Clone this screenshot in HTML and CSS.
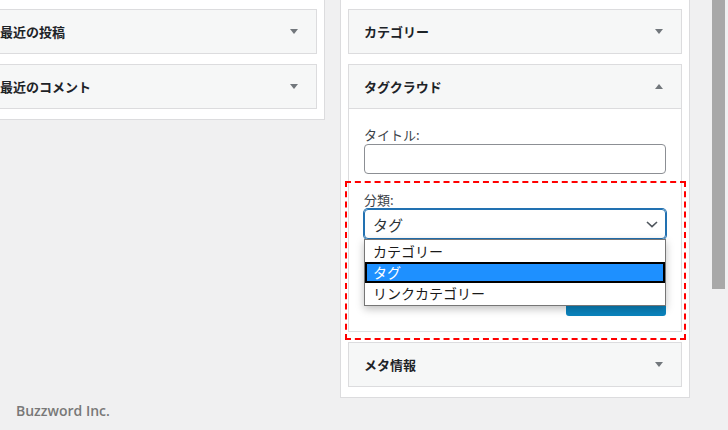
FILE: index.html
```html
<!DOCTYPE html>
<html lang="ja">

<head>
  <meta charset="UTF-8" />
  <title>ウィジェット - タグクラウド</title>
  <link rel="stylesheet" href="styles.css">
</head>

<body>
  <div class="page">
    <main class="main">
      <div class="areas">
        <!-- 左のウィジェットエリア -->
        <section class="area area-left">
          <div class="widget">
            <div class="widget-top">
              <h3>最近の投稿</h3>
              <span class="arrow"></span>
            </div>
          </div>
          <div class="widget">
            <div class="widget-top">
              <h3>最近のコメント</h3>
              <span class="arrow"></span>
            </div>
          </div>
        </section>

        <!-- 右のウィジェットエリア -->
        <section class="area area-right">
          <div class="widget">
            <div class="widget-top">
              <h3>カテゴリー</h3>
              <span class="arrow"></span>
            </div>
          </div>

          <div class="widget open">
            <div class="widget-top">
              <h3>タグクラウド</h3>
              <span class="arrow"></span>
            </div>
            <!-- 設定フォーム -->
            <div class="widget-inside">
              <label class="label">タイトル:</label>
              <div class="input"></div>

              <label class="label label-gap">分類:</label>
              <div class="select-wrap">
                <div class="select">
                  <span>タグ</span>
                  <svg class="chev" width="12" height="7" viewBox="0 0 12 7">
                    <path d="M1 1 L6 5.6 L11 1" fill="none" stroke="#50575e" stroke-width="1.6" />
                  </svg>
                </div>
                <!-- 開いたドロップダウン -->
                <ul class="options">
                  <li>カテゴリー</li>
                  <li class="on">タグ</li>
                  <li>リンクカテゴリー</li>
                </ul>
              </div>

              <div class="actions">
                <span class="btn">保存</span>
              </div>
            </div>
          </div>

          <div class="widget">
            <div class="widget-top">
              <h3>メタ情報</h3>
              <span class="arrow"></span>
            </div>
          </div>

          <!-- 注目枠 -->
          <div class="mark"></div>
        </section>
      </div>

      <p class="footer">Buzzword Inc.</p>
    </main>

    <!-- スクロールバー -->
    <div class="scroll">
      <div class="thumb"></div>
    </div>
  </div>
</body>

</html>
```

FILE: styles.css
```css
/* 초기화 */
html,
body,
ul,
h3,
p {
  margin: 0;
  padding: 0;
}

ul {
  list-style: none;
}

body {
  height: 430px;
  overflow: hidden;
  background-color: #f0f0f1;
  color: #1d2327;
  font-family: "Noto Sans CJK JP", "Noto Sans", sans-serif;
}

/* 전체 */
.page {
  display: flex;
  height: 430px;
}

.main {
  flex: 1;
}

/* 위젯 영역 2단 */
.areas {
  display: flex;
  align-items: flex-start;
  gap: 15px;
  margin-left: -24px;
}

.area {
  position: relative;
  box-sizing: border-box;
  padding: 9px 7px 10px;
  background-color: #fff;
  border: 1px solid #dcdcde;
  border-top: 0;
}

.area-left {
  width: 349px;
}

.area-right {
  width: 350px;
}

/* 위젯 박스 */
.widget {
  border: 1px solid #dcdcde;
  background-color: #f6f7f7;
}

.widget+.widget {
  margin-top: 10px;
}

.widget-top {
  display: flex;
  align-items: center;
  justify-content: space-between;
  height: 43px;
  padding: 0 18px 0 15px;
}

.widget-top h3 {
  font-size: 13px;
  font-weight: 700;
  line-height: 43px;
}

/* 삼각형 */
.arrow {
  width: 0;
  height: 0;
  border-left: 4px solid transparent;
  border-right: 4px solid transparent;
  border-top: 5px solid #72777c;
}

.open .arrow {
  border-top: 0;
  border-bottom: 5px solid #72777c;
}

.open .widget-top {
  border-bottom: 1px solid #dcdcde;
}

/* 펼친 내용 */
.widget-inside {
  padding: 17px 15px 15px;
  background-color: #fff;
}

.label {
  display: block;
  font-size: 13px;
  line-height: 18px;
  color: #3c434a;
}

.label-gap {
  margin-top: 17px;
}

.input {
  box-sizing: border-box;
  height: 30px;
  border: 1px solid #8c8f94;
  border-radius: 4px;
  background-color: #fff;
}

/* 셀렉트 */
.select-wrap {
  position: relative;
}

.select {
  display: flex;
  align-items: center;
  justify-content: space-between;
  box-sizing: border-box;
  height: 30px;
  padding: 0 7px 0 8px;
  border: 1px solid #2271b1;
  border-radius: 4px;
  box-shadow: 0 0 0 1px #2271b1;
  font-size: 15px;
  color: #2c3338;
}

.chev {
  margin-top: 1px;
}

/* 드롭다운 목록 */
.options {
  position: absolute;
  top: 30px;
  left: 0;
  right: 0;
  z-index: 2;
  padding: 1px 0;
  background-color: #fff;
  border: 1px solid #767676;
  box-shadow: 0 3px 8px rgba(0, 0, 0, .25);
}

.options li {
  padding: 0 8px;
  font-size: 14px;
  line-height: 21px;
  color: #1a1a1a;
}

.options li.on {
  background-color: #1e90ff;
  box-shadow: inset 0 0 0 2px #000;
  color: #fff;
}

/* 저장 버튼 */
.actions {
  display: flex;
  justify-content: flex-end;
  margin-top: 47px;
}

.btn {
  width: 100px;
  height: 30px;
  border-radius: 3px;
  background-color: #0a83bd;
  color: #fff;
  font-size: 13px;
  line-height: 22px;
  text-align: center;
}

/* 빨간 점선 박스 */
.mark {
  position: absolute;
  left: 4px;
  top: 181px;
  width: 341px;
  height: 159px;
  box-sizing: border-box;
  border: 2px dashed #f00;
}

/* 하단 로고 */
.footer {
  margin-top: 3px;
  padding-left: 16px;
  font-family: "Open Sans", "Noto Sans", sans-serif;
  font-size: 14px;
  font-weight: 600;
  line-height: 20px;
  color: #787878;
}

/* 스크롤바 */
.scroll {
  width: 16px;
}

.thumb {
  width: 13px;
  height: 289px;
  background-color: #a8a8a8;
}
```
